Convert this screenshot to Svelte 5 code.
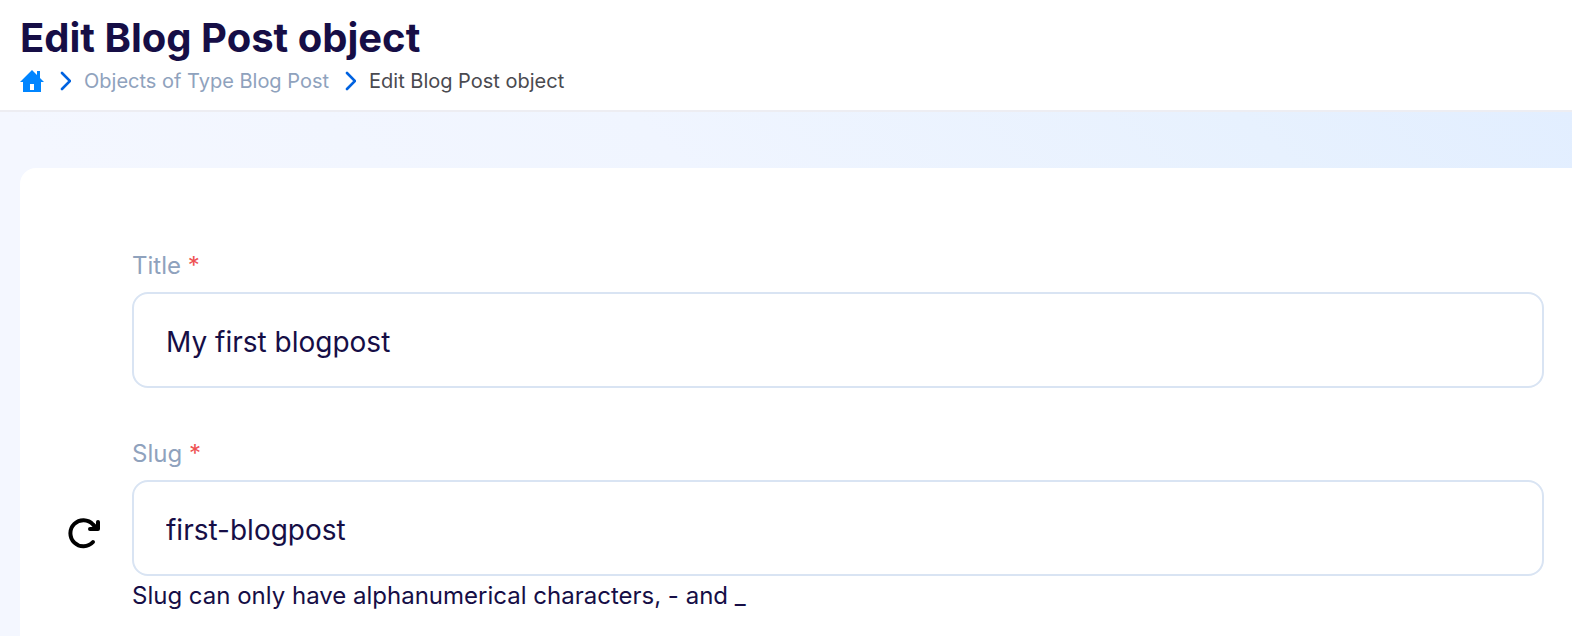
<script>
  let title = $state('My first blogpost');
  let slug = $state('first-blogpost');
</script>

{#snippet chevron()}
  <svg width="14" height="20" viewBox="0 0 14 20" aria-hidden="true"><path d="M5 2l8 8-8 8" fill="none" stroke="#0062e0" stroke-width="2.6" stroke-linecap="round" /></svg>
{/snippet}

<div class="page">
  <header>
    <h1>Edit Blog Post object</h1>
    <nav aria-label="Breadcrumb">
      <a href="#home" aria-label="Home">
        <svg width="24" height="24" viewBox="0 0 24 24"><path fill="#0085ff" fill-rule="evenodd" d="M12 1l5 5V2h3v7l4 4h-3v10H3V13H0zM10 15v6h4v-6z" /></svg>
      </a>
      {@render chevron()}
      <a href="#objects">Objects of Type Blog Post</a>
      {@render chevron()}
      <span>Edit Blog Post object</span>
    </nav>
  </header>
  <main>
    <form>
      <div class="field">
        <label for="title">Title <b>*</b></label>
        <div class="row"><input id="title" bind:value={title} /></div>
      </div>
      <div class="field">
        <label for="slug">Slug <b>*</b></label>
        <div class="row">
          <button type="button" aria-label="Regenerate slug">
            <svg width="34" height="32" viewBox="0 0 34 32"><path d="M27 25A13 13 0 1 1 27 7.5L31 11.5M32 5V12H24" fill="none" stroke="#000" stroke-width="4" stroke-linecap="round" stroke-linejoin="round" /></svg>
          </button>
          <input id="slug" bind:value={slug} />
        </div>
        <p>Slug can only have alphanumerical characters, - and _</p>
      </div>
    </form>
  </main>
</div>

<style>
  :global(body) { margin: 0; }
  .page { font-family: Inter, sans-serif; min-height: 100vh; display: flex; flex-direction: column; color: #160e46; }
  header { padding: 16px 20px; border-bottom: 2px solid #ededf2; background: #fff; }
  h1 { margin: 0; font-size: 40px; line-height: 44px; font-weight: 700; }
  nav { display: flex; align-items: center; gap: 13px; margin-top: 8px; font-size: 20px; line-height: 26px; color: #4a4a50; }
  nav a { color: #8fa2bd; text-decoration: none; }
  nav svg { display: block; }
  main { flex: 1; display: flex; padding: 56px 0 0 20px; background: linear-gradient(45deg, #f4f7ff 25%, #f0f5ff 55%, #e7f1fe 84%, #e2eeff); }
  form { flex: 1; background: #fff; border-radius: 16px 0 0 0; padding: 80px 28px 0 112px; }
  .field + .field { margin-top: 48px; }
  label { display: block; font-size: 24px; line-height: 36px; margin-bottom: 8px; color: #8fa2bd; }
  label b { color: #ee5253; font-weight: 400; }
  .row { display: flex; align-items: center; }
  input { flex: 1; min-width: 0; box-sizing: border-box; height: 96px; border: 2px solid #d9e4f3; border-radius: 16px; padding: 4px 32px 0; font: inherit; font-size: 28px; color: #160e46; background: #fff; }
  button { margin-left: -66px; margin-right: 32px; padding: 10px 0 0; border: 0; background: none; }
  button svg { display: block; }
  p { margin: 2px 0 0; font-size: 24px; line-height: 36px; }
</style>
